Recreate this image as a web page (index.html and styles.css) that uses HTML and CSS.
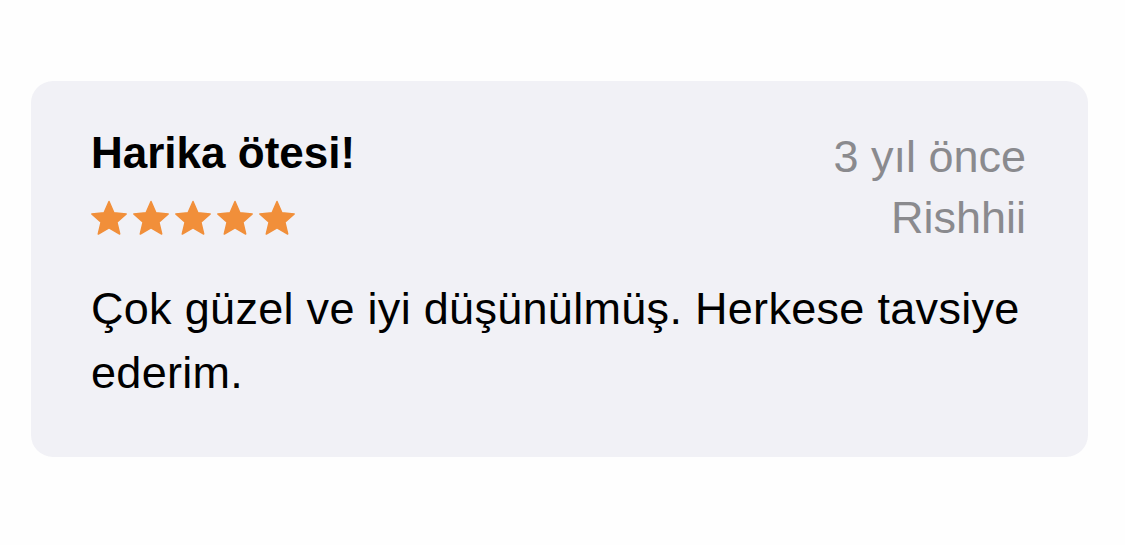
FILE: index.html
```html
<!DOCTYPE html>
<html lang="tr">
<head>
    <meta charset="UTF-8">
    <meta name="viewport" content="width=device-width, initial-scale=1.0">
    <title>Değerlendirme</title>
    <link rel="stylesheet" href="styles.css">
</head>
<body>
    <div class="review-card">
        <div class="review-header">
            <div class="review-left">
                <h2 class="review-title">Harika ötesi!</h2>
                <div class="stars">
                    <svg class="star" viewBox="0 0 38 36"><polygon points="19,1.5 23.9,12.8 36.2,13.9 26.9,22.1 29.7,34 19,27.8 8.3,34 11.1,22.1 1.8,13.9 14.1,12.8"/></svg>
                    <svg class="star" viewBox="0 0 38 36"><polygon points="19,1.5 23.9,12.8 36.2,13.9 26.9,22.1 29.7,34 19,27.8 8.3,34 11.1,22.1 1.8,13.9 14.1,12.8"/></svg>
                    <svg class="star" viewBox="0 0 38 36"><polygon points="19,1.5 23.9,12.8 36.2,13.9 26.9,22.1 29.7,34 19,27.8 8.3,34 11.1,22.1 1.8,13.9 14.1,12.8"/></svg>
                    <svg class="star" viewBox="0 0 38 36"><polygon points="19,1.5 23.9,12.8 36.2,13.9 26.9,22.1 29.7,34 19,27.8 8.3,34 11.1,22.1 1.8,13.9 14.1,12.8"/></svg>
                    <svg class="star" viewBox="0 0 38 36"><polygon points="19,1.5 23.9,12.8 36.2,13.9 26.9,22.1 29.7,34 19,27.8 8.3,34 11.1,22.1 1.8,13.9 14.1,12.8"/></svg>
                </div>
            </div>
            <div class="review-meta">
                <div>3 yıl önce</div>
                <div>Rishhii</div>
            </div>
        </div>
        <p class="review-body">Çok güzel ve iyi düşünülmüş. Herkese tavsiye ederim.</p>
    </div>
</body>
</html>
```

FILE: styles.css
```css
body {
    margin: 0;
    background-color: #fefefe;
    font-family: "Liberation Sans", Arial, sans-serif;
    color: #000;
}

.review-card {
    margin: 81px 37px 0 31px;
    padding: 45px 62px 52px 60px;
    background-color: #f1f1f6;
    border-radius: 22px;
}

.review-header {
    display: flex;
    justify-content: space-between;
    align-items: flex-start;
}

.review-title {
    margin: 0;
    font-size: 44px;
    font-weight: bold;
    line-height: 54px;
}

.stars {
    display: flex;
    gap: 4px;
    margin-top: 20px;
    margin-left: -1px;
}

.star {
    width: 38px;
    height: 36px;
    fill: #f18f3a;
    stroke: #f18f3a;
    stroke-width: 1.5;
    stroke-linejoin: round;
}

.review-meta {
    text-align: right;
    font-size: 45px;
    line-height: 61px;
    color: #8a8a8e;
}

.review-body {
    margin: 29px 0 0;
    font-size: 45px;
    line-height: 64px;
    letter-spacing: 0.3px;
}
```
